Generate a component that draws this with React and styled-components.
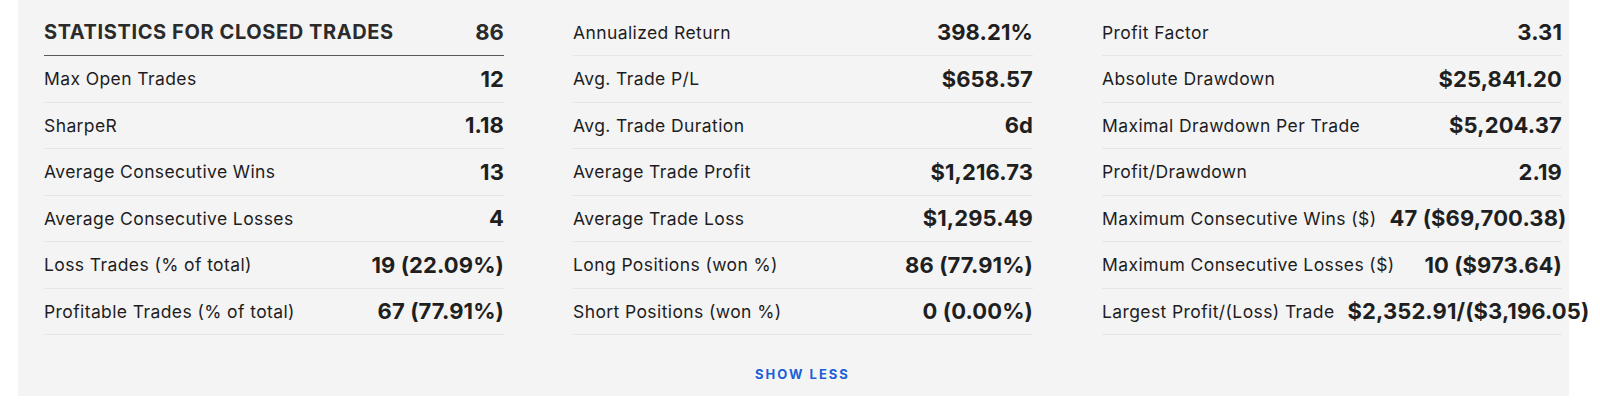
import React from "react";
import styled, { createGlobalStyle } from "styled-components";

const GlobalStyle = createGlobalStyle`
  body {
    margin: 0;
    background: #fff;
    font-family: Inter, "Liberation Sans", sans-serif;
  }
`;

const Page = styled.div`
  padding: 0 31px 0 18px;
`;

const Panel = styled.section`
  background: #f4f4f4;
  padding: 9.5px 8px 15px 26px;
`;

const Grid = styled.div`
  display: grid;
  grid-template-columns: repeat(3, 460px);
  column-gap: 69px;
`;

const Column = styled.div`
  display: flex;
  flex-direction: column;
`;

const Row = styled.div`
  display: flex;
  align-items: center;
  justify-content: space-between;
  gap: 13px;
  height: 46.5px;
  box-sizing: border-box;
  border-bottom: ${(p) => (p.heading ? "1.5px solid #5a5a5a" : "1px solid #e6e6e6")};
  white-space: nowrap;
`;

const Label = styled.span`
  flex-shrink: 0;
  font-size: 17.5px;
  color: #1d1d1f;
  letter-spacing: 0.4px;
`;

const Heading = styled.span`
  flex-shrink: 0;
  font-size: 20px;
  font-weight: 700;
  color: #2b2b2b;
  letter-spacing: 0.6px;
`;

const Value = styled.span`
  flex-shrink: 0;
  font-size: 22px;
  font-weight: 700;
  letter-spacing: 0.1px;
  color: ${(p) => (p.muted ? "#2b2b2b" : "#1f1f1f")};
`;

const Footer = styled.div`
  display: flex;
  justify-content: center;
  margin-top: 32px;
`;

const ToggleButton = styled.button`
  border: none;
  background: none;
  padding: 0;
  font-family: inherit;
  font-size: 13px;
  line-height: 14px;
  font-weight: 700;
  letter-spacing: 2px;
  color: #1b5fd8;
  cursor: pointer;
`;

const columns = [
  [
    ["STATISTICS FOR CLOSED TRADES", "86", true],
    ["Max Open Trades", "12"],
    ["SharpeR", "1.18"],
    ["Average Consecutive Wins", "13"],
    ["Average Consecutive Losses", "4"],
    ["Loss Trades (% of total)", "19 (22.09%)"],
    ["Profitable Trades (% of total)", "67 (77.91%)"],
  ],
  [
    ["Annualized Return", "398.21%"],
    ["Avg. Trade P/L", "$658.57"],
    ["Avg. Trade Duration", "6d"],
    ["Average Trade Profit", "$1,216.73"],
    ["Average Trade Loss", "$1,295.49"],
    ["Long Positions (won %)", "86 (77.91%)"],
    ["Short Positions (won %)", "0 (0.00%)"],
  ],
  [
    ["Profit Factor", "3.31"],
    ["Absolute Drawdown", "$25,841.20"],
    ["Maximal Drawdown Per Trade", "$5,204.37"],
    ["Profit/Drawdown", "2.19"],
    ["Maximum Consecutive Wins ($)", "47 ($69,700.38)"],
    ["Maximum Consecutive Losses ($)", "10 ($973.64)"],
    ["Largest Profit/(Loss) Trade", "$2,352.91/($3,196.05)"],
  ],
];

const App = () => {
  return (
    <>
      <GlobalStyle />
      <Page>
        <Panel>
          <Grid>
            {columns.map((rows, c) => (
              <Column key={c}>
                {rows.map(([label, value, heading]) => (
                  <Row key={label} heading={heading}>
                    {heading ? <Heading>{label}</Heading> : <Label>{label}</Label>}
                    <Value muted={heading}>{value}</Value>
                  </Row>
                ))}
              </Column>
            ))}
          </Grid>
          <Footer>
            <ToggleButton>SHOW LESS</ToggleButton>
          </Footer>
        </Panel>
      </Page>
    </>
  );
};

export default App;
